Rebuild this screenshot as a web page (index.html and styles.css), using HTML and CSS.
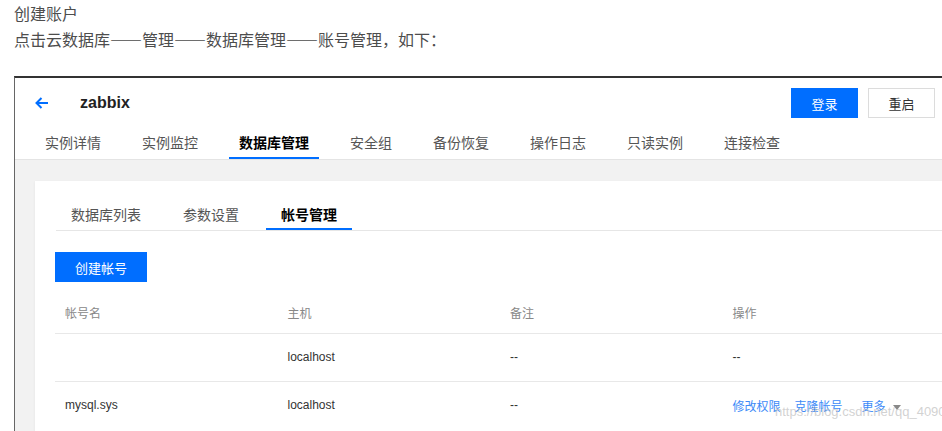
FILE: index.html
```html
<!DOCTYPE html>
<html lang="zh-CN">
<head>
  <meta charset="UTF-8">
  <meta name="viewport" content="width=device-width, initial-scale=1">
  <title>创建账户</title>
  <link rel="stylesheet" href="styles.css">
</head>
<body>
  <div class="intro">
    <p>创建账户</p>
    <p>点击云数据库——管理——数据库管理——账号管理，如下：</p>
  </div>

  <div class="shot">
    <div class="header">
      <div class="top-row">
        <div class="title">
          <svg class="back" width="14" height="12" viewBox="0 0 14 12">
            <path d="M13 6H1.5M6.5 1L1.5 6l5 5" fill="none" stroke="#006eff" stroke-width="2"/>
          </svg>
          <span class="name">zabbix</span>
        </div>
        <div class="actions">
          <button class="btn primary">登录</button>
          <button class="btn">重启</button>
        </div>
      </div>
      <div class="tabs">
        <span class="tab">实例详情</span>
        <span class="tab">实例监控</span>
        <span class="tab active">数据库管理</span>
        <span class="tab">安全组</span>
        <span class="tab">备份恢复</span>
        <span class="tab">操作日志</span>
        <span class="tab">只读实例</span>
        <span class="tab">连接检查</span>
      </div>
    </div>

    <div class="body">
      <div class="card">
        <div class="subtabs">
          <span class="subtab">数据库列表</span>
          <span class="subtab">参数设置</span>
          <span class="subtab active">帐号管理</span>
        </div>
        <button class="btn primary create">创建帐号</button>
        <table class="grid">
          <thead>
            <tr><th>帐号名</th><th>主机</th><th>备注</th><th>操作</th></tr>
          </thead>
          <tbody>
            <tr><td></td><td>localhost</td><td>--</td><td>--</td></tr>
            <tr>
              <td>mysql.sys</td><td>localhost</td><td>--</td>
              <td class="ops">
                <a>修改权限</a><a>克隆帐号</a><a class="more">更多<i class="caret"></i></a>
              </td>
            </tr>
          </tbody>
        </table>
      </div>
    </div>
  </div>

  <div class="watermark">https://blog.csdn.net/qq_4090</div>
</body>
</html>
```

FILE: styles.css
```css
* { box-sizing: border-box; }
html, body {
  height: 100%;
}
body {
  margin: 0;
  padding-left: 14px;
  overflow: hidden;
  font-family: "Liberation Sans", "Noto Sans CJK SC", sans-serif;
  background: #fff;
  position: relative;
}
.intro {
  font-family: "Noto Sans CJK SC", sans-serif;
  font-size: 16px;
  line-height: 26px;
  color: #4d4d4d;
}
.intro p {
  margin: 0;
}
.shot {
  margin-top: 24px;
  border-top: 2px solid #333;
  border-left: 1px solid #666;
  height: 355px;
  overflow: hidden;
  background: #f2f2f2;
}
.header {
  background: #fff;
  padding: 10px 7px 0 20px;
  border-bottom: 1px solid #e4e4e4;
}
.top-row {
  display: flex;
  justify-content: space-between;
  align-items: center;
  height: 30px;
}
.title {
  display: flex;
  align-items: center;
}
.back {
  display: block;
  margin-right: 31px;
}
.name {
  font-size: 16px;
  font-weight: bold;
  color: #222;
}
.actions {
  display: flex;
  gap: 10px;
}
.btn {
  font-family: inherit;
  font-size: 13px;
  width: 67px;
  height: 30px;
  border: 1px solid #dcdcdc;
  background: #fff;
  color: #333;
  padding: 0;
}
.btn.primary {
  background: #006eff;
  border-color: #006eff;
  color: #fff;
}
.tabs {
  display: flex;
  gap: 21px;
  margin-top: 15px;
}
.tab {
  font-size: 14px;
  line-height: 20px;
  padding: 0 10px 4px;
  color: #555;
  border-bottom: 2px solid transparent;
}
.tab.active {
  font-weight: bold;
  color: #000;
  border-bottom-color: #006eff;
}
.body {
  padding: 21px 0 0 20px;
}
.card {
  background: #fff;
  padding: 24px 0 0 20px;
  height: 260px;
  overflow: hidden;
  box-shadow: 0 1px 3px rgba(0, 0, 0, 0.06);
}
.subtabs {
  display: flex;
  gap: 12px;
  border-bottom: 1px solid #e6e6e6;
  margin-left: 1px;
}
.subtab {
  font-size: 14px;
  line-height: 20px;
  padding: 0 15px 3px;
  color: #555;
  border-bottom: 2px solid transparent;
}
.subtab.active {
  font-weight: bold;
  color: #000;
  border-bottom-color: #006eff;
}
.create {
  display: block;
  width: 92px;
  margin-top: 21px;
}
.grid {
  margin-top: 10px;
  border-collapse: collapse;
  table-layout: fixed;
  width: 890px;
  font-size: 12px;
}
.grid th, .grid td {
  width: 222.5px;
  text-align: left;
  padding: 0 0 0 10px;
  border-bottom: 1px solid #e8e8e8;
}
.grid th {
  height: 41px;
  font-weight: normal;
  color: #888;
}
.grid td {
  height: 48px;
  color: #333;
}
.grid tbody tr:last-child td {
  border-bottom: none;
}
.ops a {
  color: #3d8af7;
  margin-right: 14px;
}
.ops a.more {
  margin-left: 5px;
}
.caret {
  display: inline-block;
  margin-left: 7px;
  vertical-align: middle;
  border-left: 4px solid transparent;
  border-right: 4px solid transparent;
  border-top: 5px solid #888;
}
.watermark {
  position: absolute;
  left: 775px;
  top: 404px;
  font-size: 13px;
  color: rgba(190, 190, 190, 0.7);
  white-space: nowrap;
}
```
